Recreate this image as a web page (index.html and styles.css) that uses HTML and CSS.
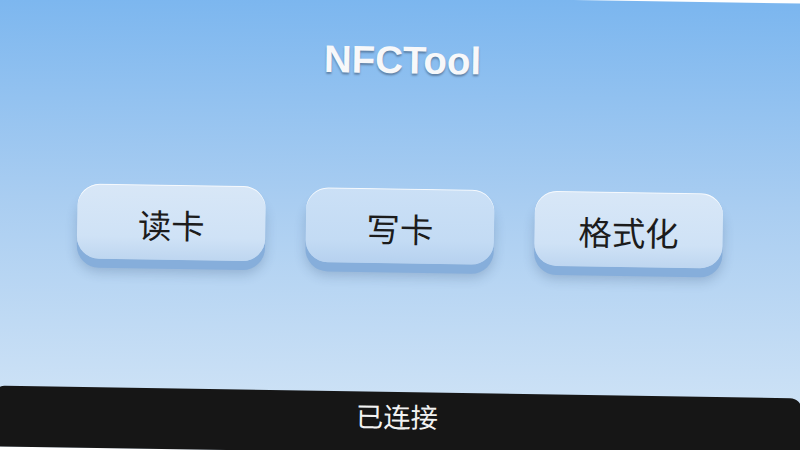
FILE: index.html
```html
<!DOCTYPE html>
<html lang="zh-CN">

<head>
    <meta charset="UTF-8" />
    <meta name="viewport" content="width=device-width, initial-scale=1.0" />
    <title>NFCTool</title>
    <link rel="stylesheet" href="styles.css">
</head>

<body>
    <div class="screen">
        <h1 class="title">NFCTool</h1>

        <div class="actions">
            <button class="action">读卡</button>
            <button class="action">写卡</button>
            <button class="action">格式化</button>
        </div>

        <div class="status">已连接</div>
    </div>
</body>

</html>
```

FILE: styles.css
```css
:root {
    --sky-top: #7bb6ef;
    --sky-bottom: #d6e7f7;
    --face: #cfe2f6;
    --ledge: #86aedb;
    --text: #1c1c1c;
}

* {
    box-sizing: border-box;
}

html,
body {
    margin: 0;
    height: 100%;
    overflow: hidden;
    background: #ffffff;
}

body {
    font-family: "Noto Sans CJK SC", "Noto Sans", sans-serif;
}

.screen {
    width: 800px;
    height: 450px;
    display: flex;
    flex-direction: column;
    align-items: center;
    background: linear-gradient(180deg, var(--sky-top) 0%, #a9cdf1 45%, var(--sky-bottom) 100%);
    transform: rotate(0.9deg) scale(1.012);
}

.title {
    margin: 39px 0 0;
    font-family: "Liberation Sans", Arial, sans-serif;
    font-size: 38px;
    line-height: 46px;
    font-weight: bold;
    color: #f7f8fa;
    text-shadow: 0 2px 2px rgba(30, 40, 60, 0.4);
}

.actions {
    display: flex;
    gap: 40px;
    margin-top: 104px;
}

.action {
    width: 186px;
    height: 74px;
    border: none;
    border-radius: 22px;
    background: linear-gradient(180deg, #d8e7f7 0%, var(--face) 70%, #bed6f0 100%);
    box-shadow:
        inset 0 1px 0 rgba(255, 255, 255, 0.8),
        0 9px 0 var(--ledge),
        0 13px 12px rgba(30, 60, 100, 0.22);
    font-family: "Noto Sans CJK SC", sans-serif;
    font-size: 33px;
    padding-top: 4px;
    color: var(--text);
    cursor: pointer;
}

.action:nth-child(2) {
    background: linear-gradient(180deg, #cbe0f6 0%, #c3dbf4 70%, #b6d1ef 100%);
}

.status {
    margin-top: auto;
    width: 800px;
    height: 60px;
    display: flex;
    align-items: center;
    justify-content: center;
    background: #161616;
    border-radius: 12px 12px 0 0;
    color: #f2f2f2;
    font-size: 27px;
    padding-bottom: 14px;
}
```
